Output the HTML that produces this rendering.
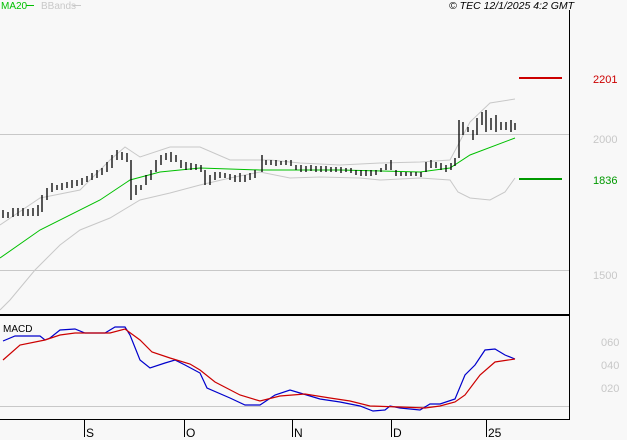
<!DOCTYPE html>
<html><head><meta charset="utf-8"><style>
html,body{margin:0;padding:0;background:#f8f8f8;width:627px;height:440px;overflow:hidden}
svg{display:block;font-family:"Liberation Sans",sans-serif}
</style></head><body>
<svg width="627" height="440" viewBox="0 0 627 440">
<rect width="627" height="440" fill="#f8f8f8"/>
<line x1="0" y1="134.5" x2="569" y2="134.5" stroke="#c8c8c8"/>
<line x1="0" y1="270.5" x2="569" y2="270.5" stroke="#c8c8c8"/>
<line x1="0" y1="406.5" x2="569" y2="406.5" stroke="#c8c8c8"/>
<line x1="569.5" y1="10" x2="569.5" y2="420" stroke="#000"/>
<line x1="0" y1="315" x2="570" y2="315" stroke="#000" stroke-width="2"/>
<line x1="0" y1="419.5" x2="570" y2="419.5" stroke="#000"/>
<g stroke="#000"><path d="M84.5 420v17M184.5 420v17M292.5 420v17M391.5 420v17M486.5 420v17"/></g>
<g font-size="12" fill="#000"><text x="86" y="437">S</text><text x="186" y="437">O</text><text x="294" y="437">N</text><text x="393" y="437">D</text><text x="488" y="437">25</text></g>
<text x="1" y="9" font-size="10" fill="#00c000">MA20</text><line x1="26" y1="5.5" x2="34" y2="5.5" stroke="#00c000"/>
<text x="41" y="9" font-size="10" fill="#c8c8c8">BBands</text><line x1="73" y1="5.5" x2="81" y2="5.5" stroke="#c8c8c8"/>
<text x="449" y="9" font-size="10.5" font-style="italic" fill="#000">© TEC 12/1/2025 4:2 GMT</text>
<polyline fill="none" stroke="#c8c8c8" points="0,225 40,198 80,190 110,160 125,147 140,157 170,147 200,147 230,160 270,160 300,163 340,165 380,163 420,162 450,160 458,145 470,122 490,103 515,99"/>
<polyline fill="none" stroke="#c8c8c8" points="0,310 10,300 35,270 45,260 60,245 80,230 110,218 140,200 170,193 200,185 230,178 260,172 290,178 320,177 360,178 380,180 420,178 450,180 458,192 470,198 490,200 505,192 515,178"/>
<polyline fill="none" stroke="#00c000" points="0,258 40,230 100,200 130,180 160,172 200,168 260,170 340,170 420,172 450,168 470,155 515,138"/>
<path fill="none" stroke="#000" stroke-width="1.3" d="M3 210v8M8 212v6M13 208v9M18 208v8M23 208v8M28 209v7M33 208v8M38 205v11M42 195v17M47 188v12M52 183v9M57 185v5M62 183v7M67 182v6M72 180v8M77 180v6M82 178v7M87 176v6M92 173v7M97 170v8M102 168v7M107 162v10M112 155v13M117 150v10M122 152v8M127 153v9M131 160v40M136 185v10M141 185v5M146 175v10M151 170v10M156 160v12M161 155v10M166 153v7M171 152v10M176 155v7M181 160v8M186 162v8M191 163v7M196 164v6M201 165v7M205 170v15M210 175v10M215 172v8M220 172v6M225 173v5M230 174v6M235 175v7M240 173v9M245 175v7M250 173v7M255 170v8M262 155v17M266 160v5M271 160v5M276 160v6M281 161v4M286 160v5M291 160v6M296 165v5M301 165v7M306 166v6M311 165v6M316 166v6M321 166v6M326 166v6M331 167v5M336 167v5M341 167v6M346 168v4M351 168v5M356 170v5M361 170v6M366 170v6M371 170v6M376 170v5M381 168v4M386 164v6M391 160v10M396 170v6M401 172v4M406 172v4M411 172v4M416 172v4M421 172v5M426 162v10M431 160v8M436 162v6M441 163v7M446 165v7M451 163v7M455 158v8M459 120v38M463 122v13M468 127v5M473 130v10M477 118v17M482 112v13M486 110v22M491 118v12M496 115v17M501 122v8M506 122v8M511 120v12M515 123v7"/>
<line x1="519" y1="78" x2="562" y2="78" stroke="#cc0000" stroke-width="2"/>
<text x="593" y="83" font-size="11" fill="#cc0000">2201</text>
<line x1="519" y1="179" x2="562" y2="179" stroke="#009900" stroke-width="2"/>
<text x="593" y="184" font-size="11" fill="#009900">1836</text>
<text x="593" y="143" font-size="11" fill="#c8c8c8">2000</text>
<text x="593" y="279" font-size="11" fill="#c8c8c8">1500</text>
<text x="3" y="332" font-size="10" fill="#000">MACD</text>
<g font-size="11" fill="#c8c8c8"><text x="601" y="346">060</text><text x="601" y="369">040</text><text x="601" y="392">020</text></g>
<polyline fill="none" stroke="#0000cc" stroke-width="1.2" points="3,341 15,336 40,336 45,340 50,338 60,330 75,329 85,333 105,333 115,327 125,327 130,335 140,360 150,368 165,363 175,360 185,365 200,373 207,388 230,398 245,405 260,405 275,395 290,390 300,393 320,399 340,402 360,406 373,411 385,410 390,406 400,408 420,410 430,404 440,404 455,399 465,375 475,365 485,350 495,349 505,355 515,359"/>
<polyline fill="none" stroke="#cc0000" stroke-width="1.2" points="3,360 20,345 45,340 60,335 75,333 110,333 125,329 140,340 152,352 170,358 190,364 200,370 215,382 240,395 260,401 280,396 305,394 330,398 350,401 370,406 400,407 425,408 440,406 455,402 465,395 480,375 495,362 515,359"/>
</svg>
</body></html>
